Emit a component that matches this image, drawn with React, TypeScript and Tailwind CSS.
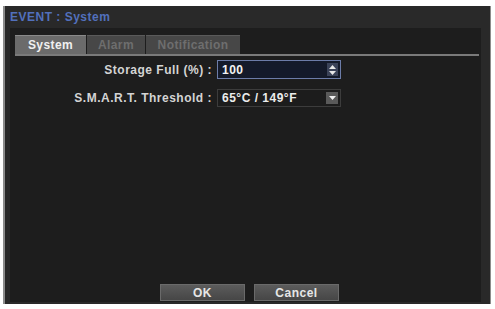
import React from 'react';

const font = { fontFamily: '"Liberation Sans", Arial, sans-serif' };

function Tab({ label, active }: { label: string; active?: boolean }) {
    return (
        <div
            className={
                active
                    ? 'h-[19px] flex items-center justify-center bg-[#6b6b6b] text-[#f0f0f0] border-t border-[#8a8a8a]'
                    : 'h-[19px] flex items-center justify-center bg-[#474747] text-[#6e6e6e] border-t border-[#5a5a5a]'
            }
        >
            {label}
        </div>
    );
}

function Button({ label }: { label: string }) {
    return (
        <div className="w-[85px] h-[17px] flex items-center justify-center bg-gradient-to-b from-[#5c5c5c] to-[#464646] border border-[#6a6a6a] text-[#e6e6e6] text-[12px] font-bold tracking-[0.5px]">
            {label}
        </div>
    );
}

export default function App() {
    return (
        <div className="w-[495px] h-[309px] bg-white pt-[6px] pl-[3px]" style={font}>
            <div className="w-[488px] h-[298px] bg-[#292929] border-l-2 border-r border-[#8c8c8c] flex flex-col">
                <div className="h-[22px] flex items-center pl-[5px] text-[12px] font-bold text-[#5270bc] tracking-[0.5px]">
                    EVENT : System
                </div>

                <div className="ml-[5px] mr-[9px] flex-1 bg-[#1d1d1d] flex flex-col mb-[2px]">
                    <div className="pt-[7px] pl-[5px] pr-[2px]">
                        <div className="grid grid-cols-[71px_58px_94px] gap-x-[1px] text-[12px] font-bold tracking-[0.4px]">
                            <Tab label="System" active />
                            <Tab label="Alarm" />
                            <Tab label="Notification" />
                        </div>
                        <div className="h-[2px] bg-[#7a7a7a]"></div>
                    </div>

                    <div className="mt-[4px] grid grid-cols-[204px_124px] gap-x-[3px] gap-y-[10px] items-center text-[12px] font-bold text-[#d4d4d4] tracking-[0.5px]">
                        <div className="text-right pr-[2px]">Storage Full (%) :</div>
                        <div className="h-[19px] bg-[#141a2a] border border-[#6c7ca8] flex items-center justify-between pl-[4px] pr-[2px] text-[#f2f2f2]">
                            <span>100</span>
                            <div className="w-[11px] h-[13px] bg-[#3a4258] flex flex-col items-center justify-center gap-[2px]">
                                <svg width="7" height="4" viewBox="0 0 7 4"><path d="M0 4 L3.5 0 L7 4 Z" fill="#e8e8e8" /></svg>
                                <svg width="7" height="4" viewBox="0 0 7 4"><path d="M0 0 L3.5 4 L7 0 Z" fill="#e8e8e8" /></svg>
                            </div>
                        </div>

                        <div className="text-right pr-[2px]">S.M.A.R.T. Threshold :</div>
                        <div className="h-[18px] bg-[#1c1c1c] border border-[#3c3c3c] flex items-center justify-between pl-[4px] pr-[2px] text-[#ececec]">
                            <span>65°C / 149°F</span>
                            <div className="w-[12px] h-[12px] bg-[#5a5a5a] flex items-center justify-center">
                                <svg width="7" height="4" viewBox="0 0 7 4"><path d="M0 0 L3.5 4 L7 0 Z" fill="#f0f0f0" /></svg>
                            </div>
                        </div>
                    </div>

                    <div className="mt-auto mb-[1px] flex justify-center">
                        <div className="flex gap-[9px] ml-[8px]">
                            <Button label="OK" />
                            <Button label="Cancel" />
                        </div>
                    </div>
                </div>
            </div>
        </div>
    );
}
